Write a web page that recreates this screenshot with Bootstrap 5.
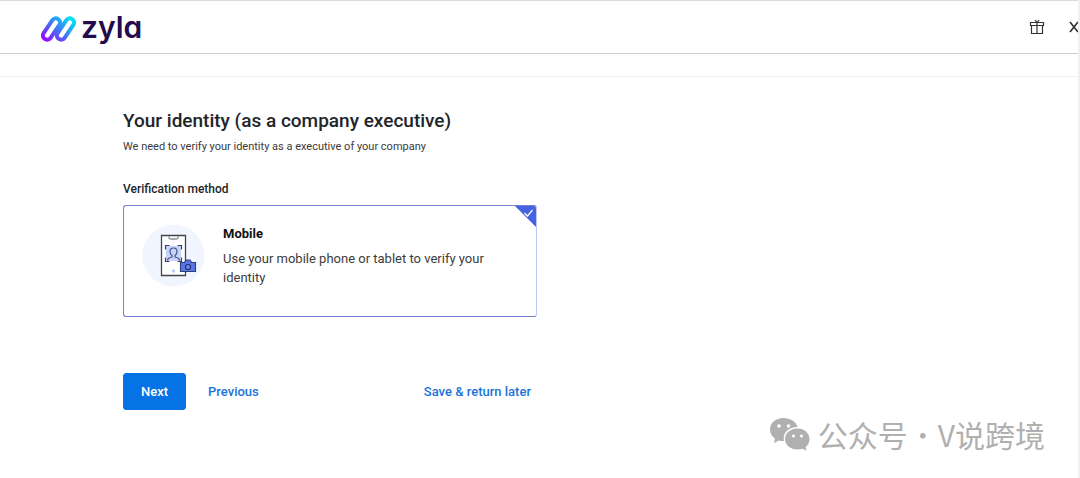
<!DOCTYPE html>
<html lang="en">
<head>
<meta charset="utf-8">
<meta name="viewport" content="width=device-width, initial-scale=1">
<title>Zyla – Verify your identity</title>
<link href="https://cdn.jsdelivr.net/npm/bootstrap@5.3.0/dist/css/bootstrap.min.css" rel="stylesheet">
<style>
  body { font-family: Roboto, "Noto Sans CJK SC", sans-serif; color: #212529; background: #fff; font-size: 13px; line-height: 19px; min-height: 100vh; border-right: 2px solid #f0f0f0; overflow-x: hidden; }
  .topbar { height: 54px; border-top: 1px solid #dcdcdc; border-bottom: 1px solid #cfcfcf; padding-left: 41px; }
  .subbar { height: 23px; border-bottom: 1px solid #efefef; }
  .brand { color: #240b4d; gap: 5px; padding-top: 3px; }
  .brand-name { font: 600 30px/36px Inter, sans-serif; font-feature-settings: "cv11"; }
  .tool { color: #303236; line-height: 0; }
  .page { padding: 31px 20px 0 123px; }
  .form-area { max-width: 414px; }
  h1 { font-size: 19px; line-height: 26px; font-weight: 500; }
  .intro { font-size: 11px; line-height: 16px; color: #3a3a3a; margin-top: 5px; }
  legend { font-size: 12px; line-height: 18px; font-weight: 500; margin: 25px 0 7px; }
  .method { min-height: 112px; border: 1px solid #7580cc; border-right-color: #bac6f7; border-radius: 3px; padding: 18px; gap: 18px; cursor: pointer; overflow: hidden; }
  .method-title { font-weight: 700; color: #111; }
  .method-text { margin-top: 6px; color: #3c3c3c; max-width: 270px; }
  .corner { top: 0; right: 0; }
  .actions { margin-top: 56px; }
  .action { font-size: 13px; line-height: 19px; font-weight: 500; padding: 8px 6px; border-radius: 3px; color: #1c73da; }
  .action-main { background: #0572e5; border-color: #0572e5; color: #fff; padding: 8px 17px; }
  .account { color: #b0b0b0; font: 400 30px/40px "Noto Sans CJK SC", sans-serif; padding-right: 33px; margin-top: 4px; gap: 8px; }
  .account-dot { font-weight: 300; }
</style>
</head>
<body>
<header>
  <div class="topbar d-flex align-items-center justify-content-between">
    <a href="#" class="brand d-flex align-items-center text-decoration-none">
      <svg width="35" height="28" viewBox="0 0 35 28" fill="none" aria-hidden="true">
        <defs>
          <linearGradient id="tint" x1="5" y1="28" x2="27" y2="2" gradientUnits="userSpaceOnUse"><stop stop-color="#a000ff"/><stop offset=".5" stop-color="#456ff5"/><stop offset="1" stop-color="#00e0f0"/></linearGradient>
          <mask id="loops" maskUnits="userSpaceOnUse" x="0" y="0" width="35" height="28">
            <g stroke="#fff" stroke-width="4">
              <rect x="6.300" y="2" width="8.400" height="24" rx="4.200" transform="rotate(34 10.500 14)"/>
              <rect x="20.300" y="2" width="8.400" height="24" rx="4.200" transform="rotate(34 24.500 14)"/>
            </g>
          </mask>
        </defs>
        <path d="M0 0h35v28H0z" fill="url(#tint)" mask="url(#loops)"/>
      </svg>
      <span class="brand-name pb-1">zyla</span>
    </a>
    <div class="d-flex align-items-center gap-4">
      <button type="button" class="tool btn border-0 p-0" aria-label="Rewards">
        <svg width="16" height="16" viewBox="0 0 16 16" fill="none" stroke="currentColor" stroke-width="1.200"><path d="M1.500 3.500h13v3h-13zM2.500 6.500h11v8h-11zM8 3.500v11M8 3.500 6 1M8 3.500 10 1"/></svg>
      </button>
      <button type="button" class="tool btn border-0 p-0" aria-label="Close">
        <svg width="9" height="12" viewBox="0 0 9 12" fill="none" stroke="currentColor" stroke-width="1.700"><path d="m1 1 8 10M9 1 1 11"/></svg>
      </button>
    </div>
  </div>
  <div class="subbar"></div>
</header>
<main class="page">
  <form class="form-area">
    <h1 class="mb-0">Your identity (as a company executive)</h1>
    <p class="intro mb-0">We need to verify your identity as a executive of your company</p>
    <fieldset>
      <legend>Verification method</legend>
      <input class="visually-hidden" type="radio" name="method" id="mobile" checked>
      <label class="method d-flex align-items-start position-relative" for="mobile">
        <svg class="flex-shrink-0" width="63" height="63" viewBox="0 0 63 63" fill="none" aria-hidden="true">
          <circle cx="31.500" cy="31.500" r="31" fill="#f1f5ff"/>
          <path d="M19.500 11.500h24v40h-24z" fill="#fff" stroke="#45464d" stroke-width="1.300"/>
          <path d="M27 12.500v1q0 1.500 1.500 1.500h6q1.500 0 1.500-1.500v-1" stroke="#4d5267"/>
          <path d="M24 22h15v15H24z" fill="#c6d3fb"/>
          <path d="M23.500 25.500v-4h4M35.500 21.500h4v4M23.500 33.500v4h4M35.500 37.500h4v-4" stroke="#3e4355" stroke-width="1.200"/>
          <path d="M25.500 36.500q0-2.500 4.500-3.500v-1.500q-2-1.500-2-4 0-3.500 3.500-3.500t3.500 3.500q0 2.500-2 4V33q4.500 1 4.500 3.500" stroke="#485481" stroke-width="1.200"/>
          <circle cx="31.500" cy="47" r="1.700" fill="#bdcbfa"/>
          <path d="M38.500 38.500h4l1.500-2.500h4l1.500 2.500h4v9h-15z" fill="#5876e7" stroke="#303d7c" stroke-width="1.100"/>
          <circle cx="46" cy="43" r="2.500" fill="#6f8df0" stroke="#26326c" stroke-width="1.200"/>
        </svg>
        <span class="d-block">
          <span class="method-title d-block">Mobile</span>
          <span class="method-text d-block">Use your mobile phone or tablet to verify your identity</span>
        </span>
        <svg class="corner position-absolute" width="21" height="21" viewBox="0 0 21 21" fill="none" aria-hidden="true"><path d="M0 0h21v21z" fill="#4863df"/><path d="m9.500 7 3 3 5-6" stroke="#fff" stroke-width="1.200"/></svg>
      </label>
    </fieldset>
    <div class="actions d-flex align-items-center">
      <button type="submit" class="action action-main btn">Next</button>
      <button type="button" class="action btn border-0 ms-3">Previous</button>
      <button type="button" class="action btn border-0 ms-auto">Save &amp; return later</button>
    </div>
  </form>
</main>
<footer class="account d-flex align-items-center justify-content-end">
  <svg width="41" height="34" viewBox="0 0 41 34" aria-hidden="true">
    <path fill="#b0b0b0" d="M14.500 1C6.500 1 1 6 1 12.500c0 4 2 7 5 9L5 26l5-2.500q2.500.8 5 .5C13 16 20 10 28.500 10 27 4.500 21.500 1 14.500 1Z"/>
    <path fill="#b0b0b0" d="M28.500 11.500C21.500 11.500 16 16 16 22s5.500 10.500 12.500 10.500q2.500 0 5-.8l4 2-1-3.500c2.500-2 4-5 4-8 0-6-5-10.700-12-10.700Z"/>
    <g fill="#fff"><circle cx="10" cy="9" r="1.800"/><circle cx="19.500" cy="9" r="1.800"/><circle cx="24.500" cy="19" r="1.500"/><circle cx="32.500" cy="19" r="1.500"/></g>
  </svg>
  <span lang="zh">公众号<span class="account-dot">·</span>V说跨境</span>
</footer>
<script src="https://cdn.jsdelivr.net/npm/bootstrap@5.3.0/dist/js/bootstrap.bundle.min.js"></script>
</body>
</html>
